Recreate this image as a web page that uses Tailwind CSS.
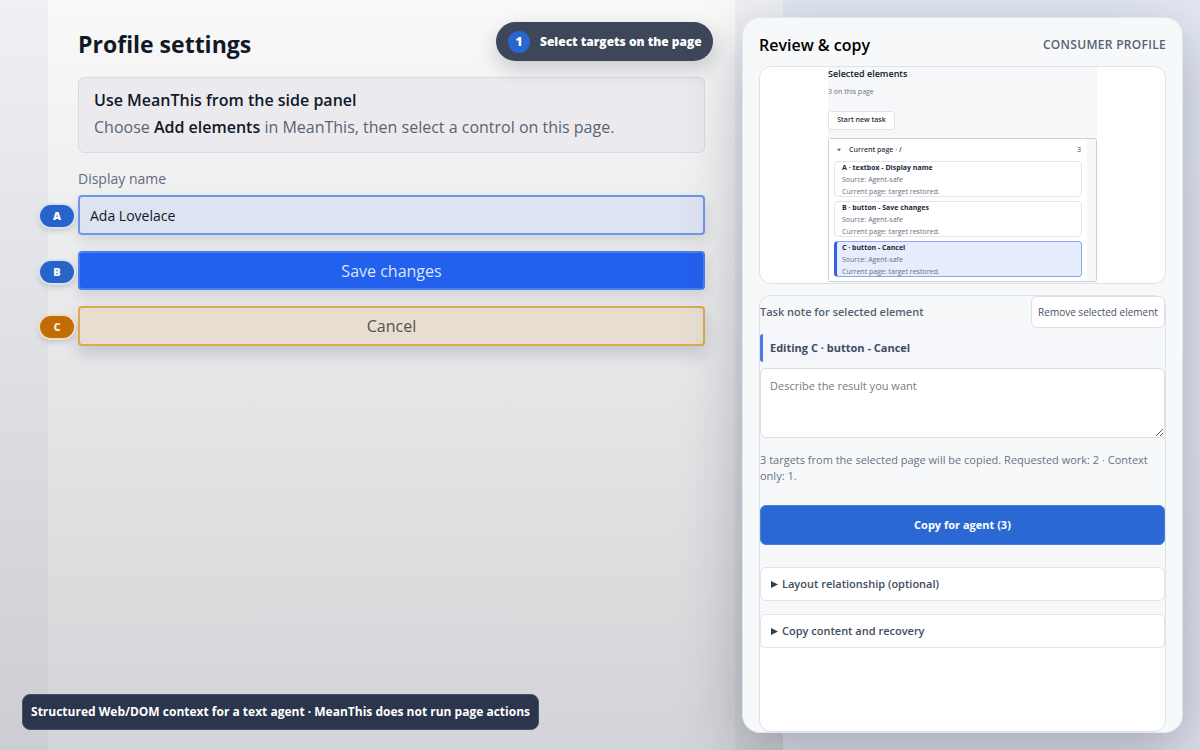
<!DOCTYPE html>
<html lang="en">
<head>
<meta charset="utf-8">
<meta name="viewport" content="width=device-width, initial-scale=1">
<title>Profile settings</title>
<script src="https://cdn.jsdelivr.net/npm/@tailwindcss/browser@4"></script>
</head>
<body class="font-['Open_Sans','Noto_Sans',sans-serif] bg-linear-to-b from-[#e2e7f1] to-[#dde1eb] text-[#111827]">
<div class="relative flex min-h-screen overflow-hidden">

  <div class="flex flex-1 bg-linear-to-b from-[#eff0f5] to-[#cdced2] px-12">
    <main class="flex-1 bg-linear-to-b from-[#f9f9f9] to-[#d3d4d7] px-[30px] pt-7">
      <h1 class="text-[23px] leading-8 font-bold">Profile settings</h1>
      <section class="mt-[17px] h-[76px] rounded-md border border-[#d9dbe2] bg-[#e8e9ed]/80 px-[15px] pt-[9px]">
        <h2 class="text-base leading-[27px] font-semibold">Use MeanThis from the side panel</h2>
        <p class="text-base leading-[27px] text-[#596474]">Choose <strong class="font-semibold text-[#111827]">Add elements</strong> in MeanThis, then select a control on this page.</p>
      </section>
      <form>
        <label for="display-name" class="mt-4 block text-sm leading-5 text-[#636c7a]">Display name</label>
        <div class="relative mt-[6px]">
          <span class="absolute top-2 -left-10 flex h-[26px] w-[38px] items-center justify-center rounded-full border-2 border-[#d5e1f5] bg-[#2863c9] text-[11px] font-extrabold text-white shadow-md">A</span>
          <input id="display-name" type="text" value="Ada Lovelace" class="block h-10 w-full rounded-[4px] border-2 border-[#6c98e8] bg-[#dde3f0] px-[10px] text-sm shadow-[0_6px_14px_rgba(15,23,42,0.12)]">
        </div>
        <div class="relative mt-4">
          <span class="absolute top-2 -left-10 flex h-[26px] w-[38px] items-center justify-center rounded-full border-2 border-[#d5e1f5] bg-[#2863c9] text-[11px] font-extrabold text-white shadow-md">B</span>
          <button type="button" class="block h-[39px] w-full rounded-[4px] border-2 border-[#4a80ee] bg-[#2360ee] text-base text-[#dbe6fb] shadow-[0_6px_14px_rgba(15,23,42,0.12)]">Save changes</button>
        </div>
        <div class="relative mt-4">
          <span class="absolute top-2 -left-10 flex h-[26px] w-[38px] items-center justify-center rounded-full border-2 border-[#efdec4] bg-[#c16c05] text-[11px] font-extrabold text-[#fbe9d0] shadow-md">C</span>
          <button type="button" class="block h-10 w-full rounded-[4px] border-2 border-[#e0a750] bg-[#e7ded1] text-base text-[#54524f] shadow-[0_8px_16px_rgba(15,23,42,0.16)]">Cancel</button>
        </div>
      </form>
    </main>
  </div>

  <div class="absolute top-[22px] left-[496px] flex h-[39px] w-[217px] items-center gap-[10px] rounded-full bg-[#3e4759] pl-3 text-xs font-extrabold whitespace-nowrap text-white shadow-[0_8px_20px_rgba(15,23,42,0.2)]">
    <span class="flex size-[22px] shrink-0 items-center justify-center rounded-full bg-[#2866d0]">1</span>
    <span>Select targets on the page</span>
  </div>
  <p class="absolute bottom-[20px] left-[22px] flex h-[36px] w-[517px] items-center justify-center rounded-lg border border-[#46516a] bg-[#2b354b] text-xs font-bold whitespace-nowrap text-white">Structured Web/DOM context for a text agent · MeanThis does not run page actions</p>

  <aside class="relative mt-[17px] mr-[17px] mb-[17px] -ml-[41px] flex w-[441px] flex-col rounded-[18px] border border-[#e2e6ee] bg-[#f6f8fa] px-4 shadow-[0_20px_60px_rgba(15,23,42,0.28)]">
    <header class="flex h-12 items-center justify-between pt-[6px]">
      <h2 class="text-base leading-5 font-semibold text-black">Review &amp; copy</h2>
      <span class="text-xs font-semibold tracking-wide text-[#586273]">CONSUMER PROFILE</span>
    </header>

    <section class="h-[218px] rounded-xl border border-[#dfe3e9] bg-white">
      <div class="mx-auto flex h-full w-[269px] flex-col bg-[#f6f7f9] text-[7px]">
        <h3 class="text-[9px] leading-[14px] font-semibold">Selected elements</h3>
        <p class="mt-1 leading-[14px] text-[#6b7480]">3 on this page</p>
        <button type="button" class="mt-3 h-[19px] w-[67px] rounded-[3px] border border-[#e0e4ea] bg-white font-semibold text-[#273142]">Start new task</button>
        <div class="mt-2 h-[144px] rounded-[3px] border border-[#ccd0d6] pr-[9px]">
          <div class="flex h-full flex-col gap-1 bg-white px-[5px]">
            <div class="-mb-1 flex h-[22px] items-center pl-[3px] font-semibold text-[#333d4d]">
              <svg class="mr-2 size-1" viewBox="0 0 6 6" fill="#555f6e" aria-hidden="true"><path d="M0 1h6L3 5z"/></svg>
              <span>Current page · /</span><span class="mr-[1px] ml-auto font-normal">3</span>
            </div>
            <article class="h-9 rounded-[4px] border border-[#e2e5ea] pl-[7px] leading-[12px] text-[#687180]"><h4 class="font-bold text-[#202939]">A · textbox - Display name</h4><p>Source: Agent-safe</p><p>Current page: target restored.</p></article>
            <article class="h-9 rounded-[4px] border border-[#e2e5ea] pl-[7px] leading-[12px] text-[#687180]"><h4 class="font-bold text-[#202939]">B · button - Save changes</h4><p>Source: Agent-safe</p><p>Current page: target restored.</p></article>
            <article class="h-9 rounded-[4px] border border-l-[3px] border-[#8ba9ee] border-l-[#2f5fe3] bg-[#e7edfd] pl-[5px] leading-[12px] text-[#687180]"><h4 class="font-bold text-[#202939]">C · button - Cancel</h4><p>Source: Agent-safe</p><p>Current page: target restored.</p></article>
          </div>
        </div>
      </div>
    </section>

    <section class="mt-[11px] flex flex-1 flex-col rounded-xl border border-[#dde1e8] bg-white text-[11px]">
      <div class="rounded-t-xl bg-[#f6f8fa]">
        <div class="flex h-8 items-center justify-between">
          <label for="note" class="font-semibold text-[#556070]">Task note for selected element</label>
          <button type="button" class="h-8 w-[134px] rounded-md border border-[#dbe0e7] bg-white text-[10px] whitespace-nowrap text-[#465163]">Remove selected element</button>
        </div>
        <p class="mt-[6px] flex h-7 items-center rounded-[3px] border-l-[3px] border-[#4f78e6] bg-[#f4f6fb] pl-[7px] font-bold text-[#3f4b5e]">Editing C · button - Cancel</p>
        <textarea id="note" placeholder="Describe the result you want" class="mt-[6px] block h-[70px] w-full rounded-md border border-[#dadfe6] bg-white px-[9px] py-[9px] leading-4 placeholder:text-[#757b84]"></textarea>
        <p class="mt-[14px] leading-4 text-[#6a7381]">3 targets from the selected page will be copied. Requested work: 2 · Context only: 1.</p>
        <button type="button" class="mt-[21px] h-10 w-full rounded-md border border-[#4a7fdc] bg-[#2a68d4] font-bold text-white">Copy for agent (3)</button>
        <details class="mt-[22px] rounded-md border border-[#e2e6eb] bg-white font-semibold text-[#414c5e]">
          <summary class="flex h-8 items-center gap-1 pl-[10px]"><svg class="size-[7px]" viewBox="0 0 7 7" fill="#333e50" aria-hidden="true"><path d="M0 0l7 3.5L0 7z"/></svg>Layout relationship (optional)</summary>
        </details>
        <details class="mt-[13px] rounded-md border border-[#e2e6eb] bg-white font-semibold text-[#414c5e]">
          <summary class="flex h-8 items-center gap-1 pl-[10px]"><svg class="size-[7px]" viewBox="0 0 7 7" fill="#333e50" aria-hidden="true"><path d="M0 0l7 3.5L0 7z"/></svg>Copy content and recovery</summary>
        </details>
      </div>
    </section>
  </aside>
</div>
</body>
</html>
